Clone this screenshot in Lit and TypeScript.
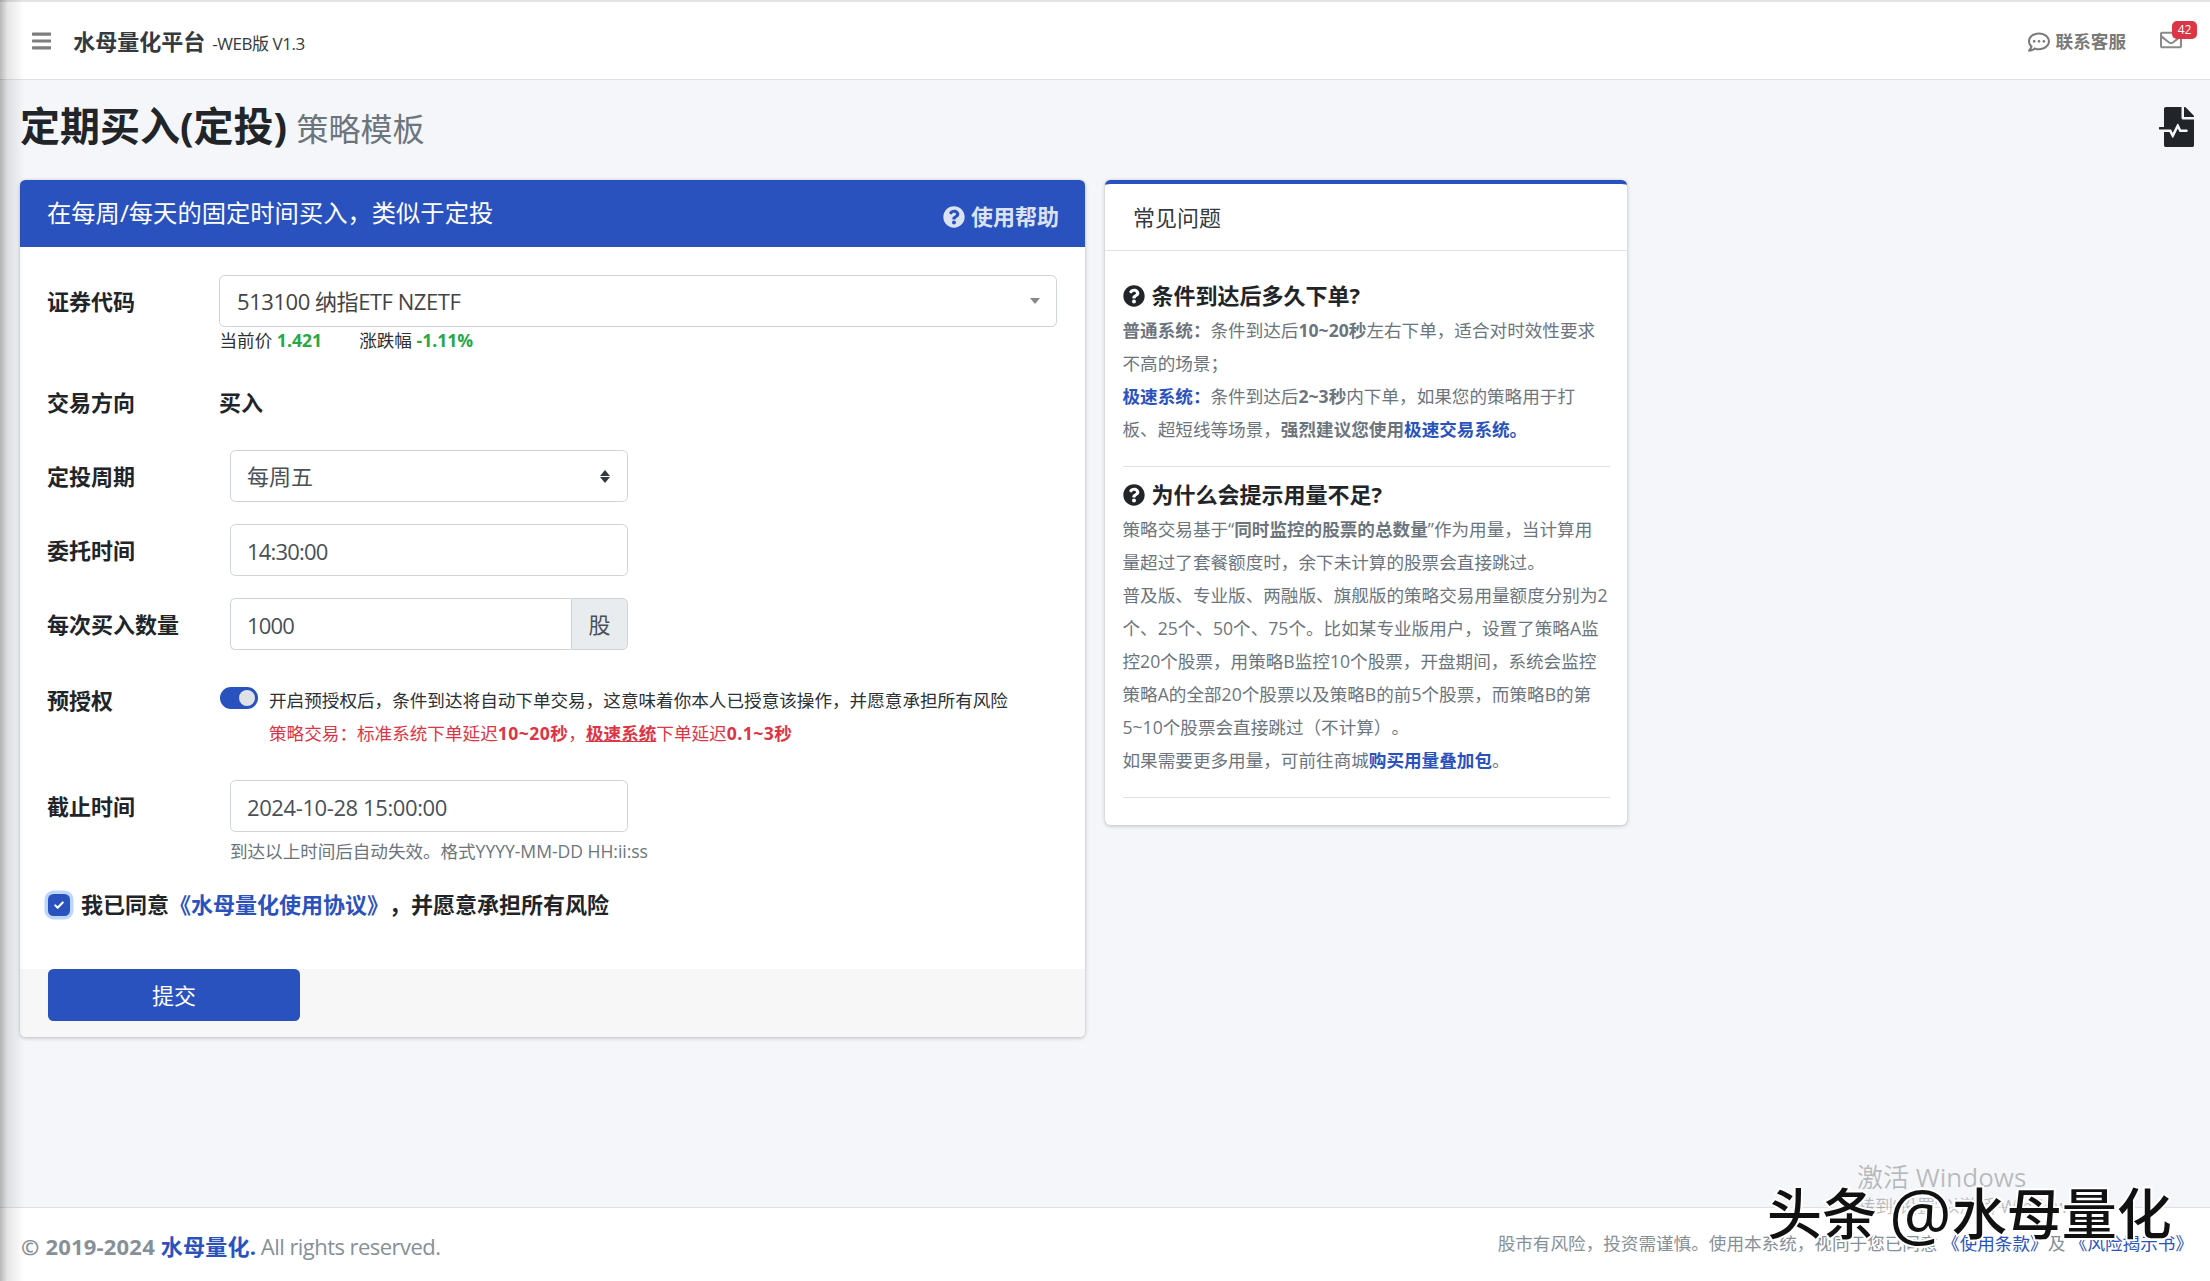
import { LitElement, html, css } from "lit";
import { customElement } from "lit/decorators.js";

const BARS = "M16 132h416c8.837 0 16-7.163 16-16V76c0-8.837-7.163-16-16-16H16C7.163 60 0 67.163 0 76v40c0 8.837 7.163 16 16 16zm0 160h416c8.837 0 16-7.163 16-16v-40c0-8.837-7.163-16-16-16H16c-8.837 0-16 7.163-16 16v40c0 8.837 7.163 16 16 16zm0 160h416c8.837 0 16-7.163 16-16v-40c0-8.837-7.163-16-16-16H16c-8.837 0-16 7.163-16 16v40c0 8.837 7.163 16 16 16z";
const QUESTION = "M504 256c0 136.997-111.043 248-248 248S8 392.997 8 256C8 119.083 119.043 8 256 8s248 111.083 248 248zM262.655 90c-54.497 0-89.255 22.957-116.549 63.758-3.536 5.286-2.353 12.415 2.715 16.258l34.699 26.31c5.205 3.947 12.621 3.008 16.665-2.122 17.864-22.658 30.113-35.797 57.303-35.797 20.429 0 45.698 13.148 45.698 32.958 0 14.976-12.363 22.667-32.534 33.976C247.128 238.528 216 254.941 216 296v4c0 6.627 5.373 12 12 12h56c6.627 0 12-5.373 12-12v-1.333c0-28.462 83.186-29.647 83.186-106.667 0-58.002-60.165-102-116.531-102zM256 338c-25.365 0-46 20.635-46 46 0 25.364 20.635 46 46 46s46-20.636 46-46c0-25.365-20.635-46-46-46z";
const COMMENT = "M144 208c-17.7 0-32 14.3-32 32s14.3 32 32 32 32-14.3 32-32-14.3-32-32-32zm112 0c-17.7 0-32 14.3-32 32s14.3 32 32 32 32-14.3 32-32-14.3-32-32-32zm112 0c-17.7 0-32 14.3-32 32s14.3 32 32 32 32-14.3 32-32-14.3-32-32-32zM256 32C114.6 32 0 125.1 0 240c0 47.6 19.9 91.2 52.9 126.3C38 405.7 7 439.1 6.5 439.5c-6.6 7-8.4 17.2-4.6 26S14.4 480 24 480c61.5 0 110-25.7 139.1-46.3C192 442.8 223.2 448 256 448c141.4 0 256-93.1 256-208S397.4 32 256 32zm0 368c-26.7 0-53.1-4.1-78.4-12.1l-22.7-7.2-19.5 13.8c-14.3 10.1-33.9 21.4-57.5 29 7.3-12.1 14.4-25.7 19.9-40.2l10.6-28.1-20.6-21.8C69.7 314.1 48 282.2 48 240c0-88.2 93.3-160 208-160s208 71.8 208 160-93.3 160-208 160z";
const ENVELOPE = "M464 64H48C21.49 64 0 85.49 0 112v288c0 26.51 21.49 48 48 48h416c26.51 0 48-21.49 48-48V112c0-26.51-21.49-48-48-48zm0 48v40.805c-22.422 18.259-58.168 46.651-134.587 106.49-16.841 13.247-50.201 45.072-73.413 44.701-23.208.375-56.579-31.459-73.413-44.701C106.18 199.465 70.425 171.067 48 152.805V112h416zM48 400V214.398c22.914 18.251 55.409 43.862 104.938 82.646 21.857 17.205 60.134 55.186 103.062 54.955 42.717.231 80.509-37.199 103.053-54.947 49.528-38.783 82.032-64.401 104.947-82.653V400H48z";
const FILE_PULSE = "M288 136V0H88C74.7 0 64 10.7 64 24v232H8c-4.4 0-8 3.6-8 8v16c0 4.4 3.6 8 8 8h140.9c3 0 5.8 1.7 7.2 4.4l19.9 39.8 56.8-113.7c2.9-5.9 11.4-5.9 14.3 0l34.7 69.5H352c8.8 0 16 7.2 16 16s-7.2 16-16 16h-89.9L240 275.8l-56.8 113.7c-2.9 5.9-11.4 5.9-14.3 0L134.1 320H64v168c0 13.3 10.7 24 24 24h336c13.3 0 24-10.7 24-24V160H312c-13.2 0-24-10.8-24-24zm153-31L343.1 7c-4.5-4.5-10.6-7-17-7H320v128h128v-6.1c0-6.3-2.5-12.4-7-16.9z";

const icon = (d: string, box: string, cls: string) =>
  html`<svg class=${cls} viewBox=${box} aria-hidden="true"><path fill="currentColor" d=${d}></path></svg>`;

@customElement("app-root")
export class AppRoot extends LitElement {
  static styles = css`
    :host {
      display: block;
      position: relative;
      width: 2210px;
      height: 1281px;
      overflow: hidden;
      background: #f4f6f9;
      color: #212529;
      font-family: "Open Sans", "Noto Sans CJK SC", sans-serif;
      font-size: 22px;
      line-height: 33px;
      text-spacing-trim: space-all;
    }
    * { box-sizing: border-box; }
    a { color: #2a52be; text-decoration: none; }
    b { font-weight: 700; }
    .shell { height: 100%; display: flex; flex-direction: column; }

    .nav {
      flex: none;
      height: 80px;
      background: #fff;
      border-top: 2px solid #e4e4e4;
      border-bottom: 1px solid #dee2e6;
      display: flex;
      align-items: center;
      padding: 2px 13px 0 32px;
    }
    .bars { width: 19.25px; height: 22px; color: #7d7d7d; margin-top: -2px; }
    .brand { margin-left: 22px; font-weight: 700; color: #343a40; }
    .ver { margin-left: 7px; font-size: 17px; letter-spacing: -.45px; color: #343a40; margin-top: 3px; }
    .spacer { flex: 1; }
    .service { display: flex; align-items: center; gap: 6px; color: #7a7a7a; font-size: 17.6px; font-weight: 600; }
    .comment { width: 22px; height: 22px; }
    .mail { position: relative; margin-left: 34px; width: 37px; height: 30px; color: #8a8a8a; }
    .env { position: absolute; left: 0; top: 2px; width: 22px; height: 22px; }
    .badge {
      position: absolute; left: 12px; top: -6px;
      width: 25px; height: 18px;
      background: #dc3545; color: #fff;
      border-radius: 5px;
      font-size: 12px; line-height: 18px; text-align: center;
    }

    .content { flex: 1; padding: 0 16px 0 20px; display: flex; flex-direction: column; }
    .head { height: 100px; display: flex; align-items: center; justify-content: space-between; padding-bottom: 6px; }
    .title { margin: 0; font-size: 40px; line-height: 60px; font-weight: 700; }
    .title small { font-size: 32px; font-weight: 400; color: #6c757d; margin-left: -1px; }
    .file { width: 35px; height: 40px; color: #212529; }

    .columns { display: grid; grid-template-columns: 1065px 522px; column-gap: 20px; align-items: start; }
    .card { background: #fff; border-radius: 5.5px; box-shadow: 0 0 1px rgba(0,0,0,.2), 0 1px 4px rgba(0,0,0,.22); overflow: hidden; }

    .card-head {
      height: 67px; background: #2a52be; color: #fff;
      display: flex; align-items: center; justify-content: space-between;
      padding: 0 26px 2px 27px;
      font-size: 24.3px;
    }
    .help { display: flex; align-items: center; gap: 6px; color: #dbe2f4; font-size: 22px; font-weight: 700; margin-top: 8px; }
    .help svg { width: 22px; height: 22px; }

    .form { padding: 28px 27px 0; display: flex; flex-direction: column; }
    .row { display: flex; align-items: flex-start; }
    .label { flex: none; width: 172px; font-weight: 700; line-height: 52px; color: #212529; }
    .wide .label { width: 183px; }
    .control {
      height: 52px; width: 398px;
      border: 1px solid #ced4da; border-radius: 5.5px;
      background: #fff; color: #495057;
      padding: 0 17px 0 16px;
      display: flex; align-items: center; justify-content: space-between;
      font: inherit;
    }
    input.control { outline: none; padding-top: 2px; letter-spacing: -.8px; }
    input.control.date { letter-spacing: -.4px; }
    .select2 { width: 838px; color: #444; position: relative; padding-left: 17px; }
    .tri { width: 0; height: 0; border: 5px solid transparent; border-top: 6px solid #888; border-bottom: 0; position: absolute; right: 16px; top: 22px; }
    .stock { flex: none; letter-spacing: -.45px; }
    .sub { font-size: 17.6px; line-height: 24px; color: #2c3136; margin: 1px 0 0 172.5px; display: flex; gap: 37px; }
    .up { color: #28a745; font-weight: 700; }

    .direction { margin-top: 33px; }
    .direction .label, .direction .value { line-height: 34px; }
    .value { font-weight: 700; color: #212529; }
    .cycle { margin-top: 31px; }
    .time, .qty { margin-top: 22px; }
    .sort { display: flex; flex-direction: column; gap: 1px; }
    .sort i { display: block; width: 0; height: 0; border-left: 5.5px solid transparent; border-right: 5.5px solid transparent; }
    .sort i:first-child { border-bottom: 6.5px solid #343a40; }
    .sort i:last-child { border-top: 6.5px solid #343a40; }
    .group { display: flex; width: 398px; height: 52px; }
    .group .control { flex: 1; width: auto; min-width: 0; border-radius: 5.5px 0 0 5.5px; border-right: 0; }
    .addon { flex: none; width: 57px; border: 1px solid #ced4da; border-radius: 0 5.5px 5.5px 0; background: #e9ecef; color: #495057; display: flex; align-items: center; justify-content: center; }

    .auth { margin-top: 34px; }
    .auth .label { line-height: 33px; width: 173px; }
    .switch { flex: none; position: relative; width: 38px; height: 22px; margin-top: 3px; border-radius: 11px; background: #2a52be; }
    .switch::after { content: ""; position: absolute; right: 3px; top: 3px; width: 16px; height: 16px; border-radius: 50%; background: #dee2e6; }
    .note { margin-left: 11px; font-size: 17.6px; line-height: 33px; color: #2c3136; }
    .red { color: #dc3545; }
    .red b { letter-spacing: .45px; }
    .red u { font-weight: 700; }

    .deadline { margin-top: 30px; }
    .hint { font-size: 17.6px; line-height: 24px; color: #6c757d; margin: 7px 0 0 183px; letter-spacing: -.05px; }
    .agree { display: flex; align-items: center; margin-top: 25px; font-weight: 700; color: #212529; }
    .check {
      flex: none; width: 22px; height: 22px; margin: 0 11px 0 1px;
      border-radius: 5.5px; background: #2a52be;
      box-shadow: 0 0 0 3.5px #bcd6fb;
      display: flex; align-items: center; justify-content: center;
    }
    .check svg { width: 12px; height: 12px; }
    .actions { margin-top: 48px; background: #f7f7f7; padding: 0 27px 16px 28px; }
    .submit {
      display: block; width: 252px; height: 52px;
      border: 0; border-radius: 5.5px;
      background: #2a52be; color: #fff;
      font: inherit;
      padding-top: 2px;
    }

    .faq { border-top: 4px solid #2a52be; }
    .faq-head { height: 67px; border-bottom: 1px solid #dee2e6; padding: 0 28px; display: flex; align-items: center; color: #343a40; }
    .faq-body { padding: 28px 17px 0 17.5px; font-size: 17.6px; line-height: 33px; color: #6c757d; }
    .q { margin: 0 0 2px; display: flex; align-items: center; gap: 7px; font-size: 22px; line-height: 33px; font-weight: 700; color: #212529; }
    .q svg { width: 22px; height: 22px; flex: none; }
    .ans { margin: 0; }
    hr { border: 0; border-top: 1px solid #dee2e6; margin: 20px 0 11px; }
    .last { margin: 20px 0 27px; }

    .foot {
      flex: none; height: 74px; background: #fff; border-top: 1px solid #dee2e6;
      display: flex; align-items: center; justify-content: space-between;
      padding: 0 17px 0 21px; color: #869099;
    }
    .foot .copy { margin-top: 4px; }
    .foot .copy b { letter-spacing: .2px; }
    .foot .rights { letter-spacing: -.55px; margin-left: -1px; }
    .foot .terms { font-size: 17.6px; margin-top: -3px; }

    .edge { position: absolute; left: 0; top: 0; bottom: 0; width: 24px; pointer-events: none; background: linear-gradient(to right, rgba(0,0,0,.28), rgba(0,0,0,.1) 30%, rgba(0,0,0,0)); }
    .activate { position: absolute; left: 1857px; top: 1160px; color: rgba(0,0,0,.25); pointer-events: none; }
    .activate div:first-child { font-size: 26px; line-height: 34px; }
    .activate div:last-child { font-size: 18px; line-height: 24px; }
    .mark {
      position: absolute; left: 1767px; top: 1177px;
      display: flex; align-items: center;
      font-size: 55px; line-height: 72px; white-space: pre; color: #111; font-weight: 500;
      -webkit-text-stroke: 4px #fff; paint-order: stroke fill;
      pointer-events: none;
    }
    .mark .at { font-size: 70px; margin-left: 12px; }
  `;

  render() {
    return html`
      <div class="shell">
        <header class="nav">
          ${icon(BARS, "0 0 448 512", "bars")}
          <span class="brand">水母量化平台</span>
          <span class="ver">-WEB版 V1.3</span>
          <span class="spacer"></span>
          <span class="service">${icon(COMMENT, "0 0 512 512", "comment")}联系客服</span>
          <span class="mail">${icon(ENVELOPE, "0 0 512 512", "env")}<span class="badge">42</span></span>
        </header>

        <main class="content">
          <div class="head">
            <h1 class="title">定期买入(定投) <small>策略模板</small></h1>
            ${icon(FILE_PULSE, "0 0 448 512", "file")}
          </div>
          <div class="columns">
            <section class="card">
              <div class="card-head">
                <span>在每周/每天的固定时间买入，类似于定投</span>
                <a class="help" href="#" @click=${(e: Event) => e.preventDefault()}>${icon(QUESTION, "0 0 512 512", "")}使用帮助</a>
              </div>
              <div class="form">
                <div class="row">
                  <div class="label">证券代码</div>
                  <div class="control select2"><span class="stock">513100 纳指ETF NZETF</span><i class="tri"></i></div>
                </div>
                <div class="sub">
                  <span>当前价 <span class="up">1.421</span></span>
                  <span>涨跌幅 <span class="up">-1.11%</span></span>
                </div>
                <div class="row direction">
                  <div class="label">交易方向</div>
                  <div class="value">买入</div>
                </div>
                <div class="row wide cycle">
                  <div class="label">定投周期</div>
                  <div class="control"><span>每周五</span><span class="sort"><i></i><i></i></span></div>
                </div>
                <div class="row wide time">
                  <div class="label">委托时间</div>
                  <input class="control" .value=${"14:30:00"} />
                </div>
                <div class="row wide qty">
                  <div class="label">每次买入数量</div>
                  <div class="group"><input class="control" .value=${"1000"} /><span class="addon">股</span></div>
                </div>
                <div class="row auth">
                  <div class="label">预授权</div>
                  <span class="switch"></span>
                  <div class="note">
                    开启预授权后，条件到达将自动下单交易，这意味着你本人已授意该操作，并愿意承担所有风险<br />
                    <span class="red">策略交易：标准系统下单延迟<b>10~20秒</b>，<u>极速系统</u>下单延迟<b>0.1~3秒</b></span>
                  </div>
                </div>
                <div class="row wide deadline">
                  <div class="label">截止时间</div>
                  <input class="control date" .value=${"2024-10-28 15:00:00"} />
                </div>
                <div class="hint">到达以上时间后自动失效。格式YYYY-MM-DD HH:ii:ss</div>
                <div class="agree">
                  <span class="check"><svg viewBox="0 0 16 16"><path d="M3 8.5l3.2 3.2L13 4.6" fill="none" stroke="#fff" stroke-width="2.8" stroke-linecap="round" stroke-linejoin="round"></path></svg></span>
                  <span>我已同意<a href="#">《水母量化使用协议》</a>，并愿意承担所有风险</span>
                </div>
              </div>
              <div class="actions"><button class="submit">提交</button></div>
            </section>

            <aside class="card faq">
              <div class="faq-head">常见问题</div>
              <div class="faq-body">
                <h3 class="q">${icon(QUESTION, "0 0 512 512", "")}条件到达后多久下单?</h3>
                <p class="ans"><b>普通系统：</b>条件到达后<b>10~20秒</b>左右下单，适合对时效性要求<br />不高的场景；</p>
                <p class="ans"><a href="#"><b>极速系统：</b></a>条件到达后<b>2~3秒</b>内下单，如果您的策略用于打<br />板、超短线等场景，<b>强烈建议您使用<a href="#">极速交易系统。</a></b></p>
                <hr />
                <h3 class="q">${icon(QUESTION, "0 0 512 512", "")}为什么会提示用量不足?</h3>
                <p class="ans">策略交易基于“<b>同时监控的股票的总数量</b>”作为用量，当计算用<br />量超过了套餐额度时，余下未计算的股票会直接跳过。</p>
                <p class="ans">普及版、专业版、两融版、旗舰版的策略交易用量额度分别为2<br />个、25个、50个、75个。比如某专业版用户，设置了策略A监<br />控20个股票，用策略B监控10个股票，开盘期间，系统会监控<br />策略A的全部20个股票以及策略B的前5个股票，而策略B的第<br />5~10个股票会直接跳过（不计算）。</p>
                <p class="ans">如果需要更多用量，可前往商城<a href="#"><b>购买用量叠加包</b></a>。</p>
                <hr class="last" />
              </div>
            </aside>
          </div>
        </main>

        <footer class="foot">
          <span class="copy"><b>© 2019-2024 <a href="#">水母量化.</a></b> <span class="rights">All rights reserved.</span></span>
          <span class="terms">股市有风险，投资需谨慎。使用本系统，视同于您已同意 <a href="#">《使用条款》</a>及 <a href="#">《风险揭示书》</a></span>
        </footer>
      </div>
      <div class="edge"></div>
      <div class="activate"><div>激活 Windows</div><div>转到“设置”以激活 Windows。</div></div>
      <div class="mark"><span>头条</span><span class="at">@</span><span>水母量化</span></div>
    `;
  }
}
